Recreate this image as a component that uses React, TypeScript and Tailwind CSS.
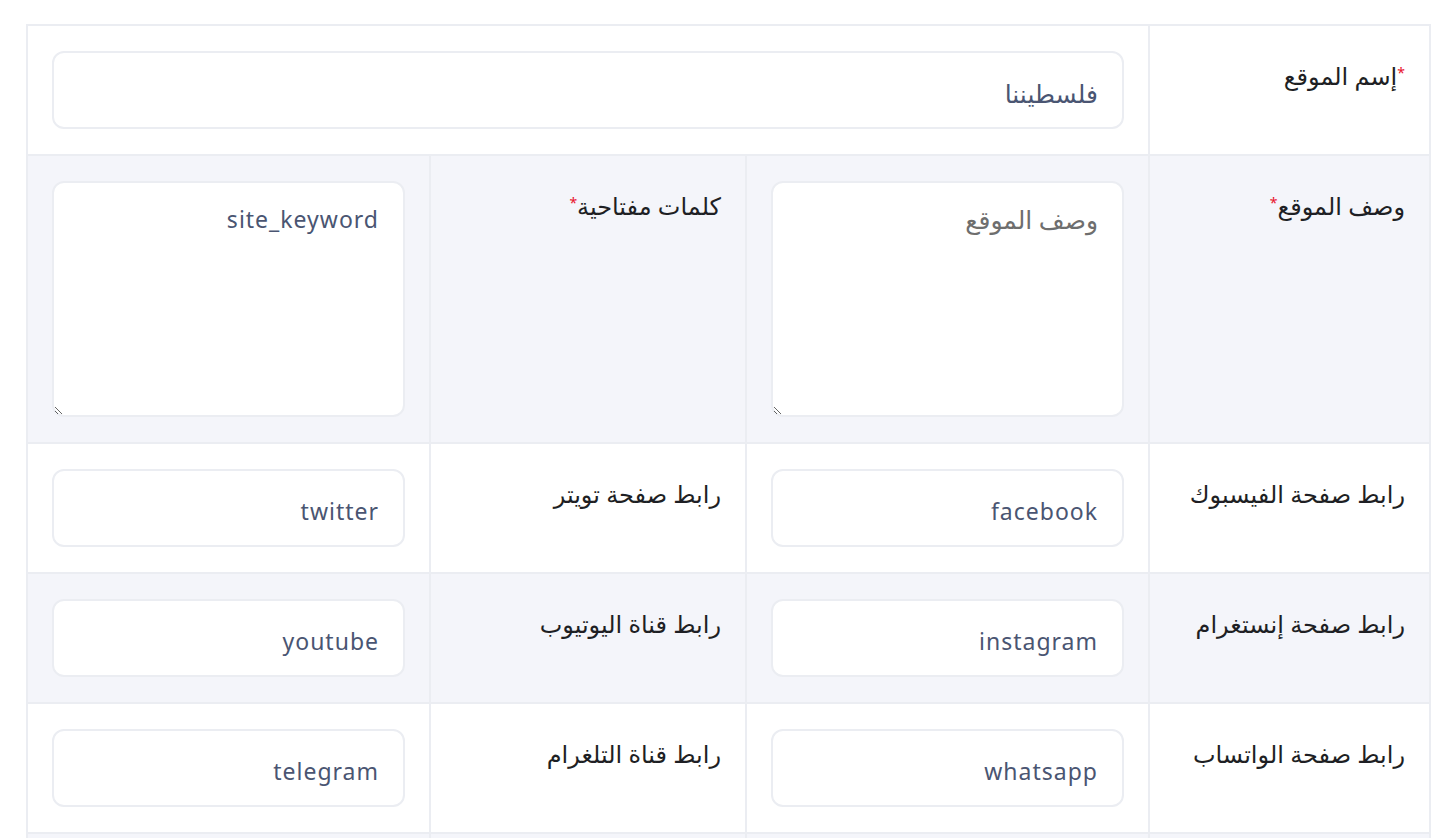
import React from "react";

type Field = {
  label: string;
  value?: string;
  star?: "before" | "after";
};

const font = { fontFamily: '"Noto Sans", "DejaVu Sans", sans-serif' };

const Label = ({ field }: { field: Field }) => (
  <td className="border-2 border-[#ebedf2] px-[24px] pt-[32px] align-top text-[24px] leading-[36px] text-[#1e1f24]">
    {field.star === "before" && (
      <sup className="text-[14px] text-[#e8112d]">*</sup>
    )}
    {field.label}
    {field.star === "after" && (
      <sup className="text-[14px] text-[#e8112d]">*</sup>
    )}
  </td>
);

const Input = ({ value, span, arabic }: { value?: string; span?: number; arabic?: boolean }) => (
  <td
    colSpan={span}
    className="border-2 border-[#ebedf2] px-[24px] py-[25px] align-top"
  >
    <input
      readOnly
      defaultValue={value}
      className={
        arabic
          ? "h-[78px] w-full rounded-xl border-2 border-[#ebedf2] bg-white px-6 pt-[6px] text-[25px] text-[#4a5572] outline-none"
          : "h-[78px] w-full rounded-xl border-2 border-[#ebedf2] bg-white px-6 pt-[6px] text-[23px] tracking-[1px] text-[#4a5572] outline-none"
      }
    />
  </td>
);

const rows: [Field, Field][] = [
  [{ label: "رابط صفحة الفيسبوك", value: "facebook" }, { label: "رابط صفحة تويتر", value: "twitter" }],
  [{ label: "رابط صفحة إنستغرام", value: "instagram" }, { label: "رابط قناة اليوتيوب", value: "youtube" }],
  [{ label: "رابط صفحة الواتساب", value: "whatsapp" }, { label: "رابط قناة التلغرام", value: "telegram" }],
];

export default function App() {
  return (
    <div className="min-h-screen bg-white pl-[26px] pr-[8px] pt-[24px]" style={font}>
      <table dir="rtl" className="w-full table-fixed border-collapse">
        <colgroup>
          <col className="w-[281px]" />
          <col className="w-[403px]" />
          <col className="w-[316px]" />
          <col className="w-[403px]" />
        </colgroup>
        <tbody>
          <tr className="bg-white">
            <Label field={{ label: "إسم الموقع", star: "before" }} />
            <Input value="فلسطيننا" span={3} arabic />
          </tr>
          <tr className="bg-[#f4f5fa]">
            <Label field={{ label: "وصف الموقع", star: "after" }} />
            <td className="border-2 border-[#ebedf2] px-[24px] py-[25px] align-top">
              <textarea
                autoFocus
                placeholder="وصف الموقع"
                className="block h-[236px] w-full rounded-xl border-2 border-[#ebedf2] bg-white px-6 pt-[18px] text-[25px] leading-[36px] text-[#4a5572] caret-[#555] outline-none placeholder:text-[#6e6e6e]"
              />
            </td>
            <Label field={{ label: "كلمات مفتاحية", star: "after" }} />
            <td className="border-2 border-[#ebedf2] px-[24px] py-[25px] align-top">
              <textarea
                readOnly
                defaultValue="site_keyword"
                className="block h-[236px] w-full rounded-xl border-2 border-[#ebedf2] bg-white px-6 pt-[20px] text-[23px] leading-[33px] tracking-[1px] text-[#4a5572] outline-none"
              />
            </td>
          </tr>
          {rows.map(([a, b], i) => (
            <tr key={i} className={i % 2 === 1 ? "bg-[#f4f5fa]" : "bg-white"}>
              <Label field={a} />
              <Input value={a.value} />
              <Label field={b} />
              <Input value={b.value} />
            </tr>
          ))}
          <tr className="h-[40px] bg-[#f4f5fa]">
            <td className="border-2 border-[#ebedf2]" />
            <td className="border-2 border-[#ebedf2]" />
            <td className="border-2 border-[#ebedf2]" />
            <td className="border-2 border-[#ebedf2]" />
          </tr>
        </tbody>
      </table>
    </div>
  );
}
